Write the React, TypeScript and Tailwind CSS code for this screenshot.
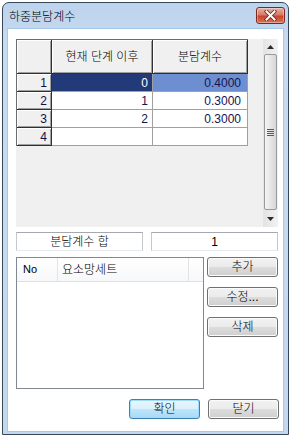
import { clsx } from "clsx";

const rows = [
  { no: 1, step: "0", coef: "0.4000" },
  { no: 2, step: "1", coef: "0.3000" },
  { no: 3, step: "2", coef: "0.3000" },
  { no: 4, step: "", coef: "" },
];

function CloseButton() {
  return (
    <div className="flex h-[17px] w-[29px] items-center justify-center rounded-[3px] border border-[#7a2a20] bg-[linear-gradient(#eab2a4,#d97a66_45%,#c8452d_55%,#d9755a)] shadow-[inset_0_0_0_1px_rgba(255,255,255,0.35)]">
      <svg width="13" height="11" viewBox="0 0 13 11">
        <path
          d="M2.5 1.5 L10.5 9.5 M10.5 1.5 L2.5 9.5"
          stroke="#6b2419"
          strokeWidth="3.6"
          strokeLinecap="square"
        />
        <path
          d="M2.5 1.5 L10.5 9.5 M10.5 1.5 L2.5 9.5"
          stroke="#ffffff"
          strokeWidth="2"
          strokeLinecap="square"
        />
      </svg>
    </div>
  );
}

function WinButton({
  children,
  primary = false,
}: {
  children: React.ReactNode;
  primary?: boolean;
}) {
  return (
    <button
      className={clsx(
        "flex h-[20px] w-[71px] items-center justify-center rounded-[3px] border text-[12px] leading-none text-black",
        primary
          ? "border-[#3c7fb1] bg-[linear-gradient(#eaf6fd,#d9f0fc_50%,#bee6fd_50%,#a7d9f5)] shadow-[inset_0_0_0_1px_#9fdcfb]"
          : "border-[#707070] bg-[linear-gradient(#f2f2f2,#ebebeb_50%,#dddddd_50%,#cfcfcf)] shadow-[inset_0_0_0_1px_#fbfbfb]",
      )}
    >
      {children}
    </button>
  );
}

const headCell =
  "flex items-center justify-center border-r border-b border-[#303030] bg-[#f0f0f0] shadow-[inset_1px_1px_0_#ffffff,inset_-1px_-1px_0_#a0a0a0]";

function Grid() {
  return (
    <div className="flex h-[188px] w-[262px] bg-[#f0f0f0]">
      <div className="self-start border-t border-l border-[#6b6b6b]">
        <div className="grid grid-cols-[35px_101px_95px]">
          <div className={clsx(headCell, "h-[34px]")} />
          <div className={clsx(headCell, "h-[34px] text-[12px] text-black")}>
            현재 단계 이후
          </div>
          <div className={clsx(headCell, "h-[34px] text-[12px] text-black")}>
            분담계수
          </div>
          {rows.map((r) => (
            <Row key={r.no} {...r} />
          ))}
        </div>
      </div>
      <ScrollBar />
    </div>
  );
}

function Row({ no, step, coef }: { no: number; step: string; coef: string }) {
  const selected = no === 1;
  return (
    <>
      <div
        className={clsx(
          headCell,
          "h-[18px] justify-end pr-[4px] text-[12px] text-[#101040]",
        )}
      >
        {no}
      </div>
      <div
        className={clsx(
          "flex h-[18px] items-center justify-end border-r border-b border-[#a0a0a0] pr-[4px] text-[12px]",
          selected ? "bg-[#233a78] text-white" : "bg-white text-[#141450]",
        )}
      >
        {step}
      </div>
      <div
        className={clsx(
          "flex h-[18px] items-center justify-end border-r border-b border-[#a0a0a0] pr-[6px] text-[12px] text-[#141450]",
          selected ? "bg-[#6d8fd2]" : "bg-white",
        )}
      >
        {coef}
      </div>
    </>
  );
}

function ScrollBar() {
  return (
    <div className="ml-auto flex h-full w-[15px] flex-col bg-[linear-gradient(90deg,#e3e3e3,#f1f1f1)]">
      <div className="flex h-[15px] items-center justify-center">
        <svg width="7" height="4" viewBox="0 0 7 4">
          <path d="M3.5 0 L7 4 L0 4 Z" fill="#2a2a2a" />
        </svg>
      </div>
      <div className="mx-[1px] flex flex-1 items-center justify-center rounded-[2px] border border-[#9a9a9a] bg-[linear-gradient(90deg,#f3f3f3,#e6e6e6_50%,#d6d6d6)]">
        <div className="flex flex-col gap-[1px]">
          <div className="h-[1px] w-[7px] bg-[#5a5a5a]" />
          <div className="h-[1px] w-[7px] bg-[#5a5a5a]" />
          <div className="h-[1px] w-[7px] bg-[#5a5a5a]" />
          <div className="h-[1px] w-[7px] bg-[#5a5a5a]" />
        </div>
      </div>
      <div className="flex h-[17px] items-center justify-center">
        <svg width="7" height="4" viewBox="0 0 7 4">
          <path d="M0 0 L7 0 L3.5 4 Z" fill="#2a2a2a" />
        </svg>
      </div>
    </div>
  );
}

function SumRow() {
  const box =
    "flex h-[19px] w-[127px] items-center justify-center border border-[#c4c7cc] border-t-[#a5a8ae] border-b-[#e6e9ee] bg-white text-[12px] text-black";
  return (
    <div className="flex gap-[8px]">
      <div className={box}>분담계수 합</div>
      <div className={box}>1</div>
    </div>
  );
}

function ListView() {
  return (
    <div className="h-[132px] w-[188px] border border-[#828790] bg-white">
      <div className="flex h-[24px] border-b border-[#e0e0e0] bg-[linear-gradient(#ffffff,#f7f8fa)] text-black">
        <div className="flex w-[41px] items-center border-r border-[#e3e3e3] pl-[6px] text-[11px]">
          No
        </div>
        <div className="flex w-[131px] items-center border-r border-[#e3e3e3] pl-[4px] text-[12px]">
          요소망세트
        </div>
      </div>
    </div>
  );
}

export default function App() {
  return (
    <div className="h-[437px] w-[294px] bg-white pt-[2px] pl-[2px] font-['Liberation_Sans','Noto_Sans_CJK_KR',sans-serif] font-light">
      <div className="flex h-[433px] w-[287px] flex-col rounded-t-[7px] border border-[#38475a] bg-[linear-gradient(#bcd3ec,#c7dbf0_40px,#c3d8ef)]">
        <div className="flex h-[25px] items-center justify-between pr-[3px] pl-[6px]">
          <span className="pt-[3px] text-[12px] text-black">하중분담계수</span>
          <CloseButton />
        </div>
        <div className="mx-[4px] mb-[2px] flex flex-1 flex-col border border-[#a6c8ea] bg-white pt-[10px] pr-[4px] pl-[8px]">
          <Grid />
          <div className="mt-[5px]">
            <SumRow />
          </div>
          <div className="mt-[6px] flex gap-[3px]">
            <ListView />
            <div className="flex flex-col gap-[10px]">
              <WinButton>추가</WinButton>
              <WinButton>수정...</WinButton>
              <WinButton>삭제</WinButton>
            </div>
          </div>
          <div className="mt-[10px] flex justify-end gap-[8px]">
            <WinButton primary>확인</WinButton>
            <WinButton>닫기</WinButton>
          </div>
        </div>
      </div>
    </div>
  );
}
